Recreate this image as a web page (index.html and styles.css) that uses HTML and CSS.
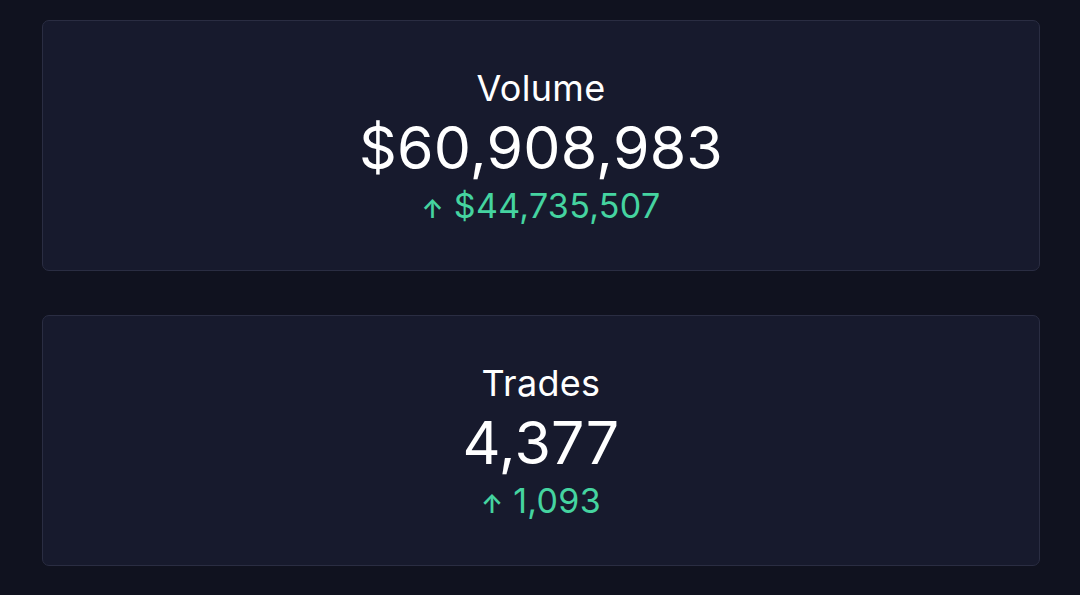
FILE: index.html
```html
<!DOCTYPE html>
<html lang="en">
<head>
    <meta charset="UTF-8">
    <meta name="viewport" content="width=device-width, initial-scale=1.0">
    <title>Stats</title>
    <link rel="stylesheet" href="styles.css">
</head>
<body>
    <div class="stats">
        <div class="card">
            <div class="label">Volume</div>
            <div class="value">$60,908,983</div>
            <div class="change"><span class="arrow">↑</span> $44,735,507</div>
        </div>
        <div class="card">
            <div class="label">Trades</div>
            <div class="value">4,377</div>
            <div class="change"><span class="arrow">↑</span> 1,093</div>
        </div>
    </div>
</body>
</html>
```

FILE: styles.css
```css
body {
    font-family: 'Inter', 'Noto Sans', sans-serif;
    background-color: #10121f;
    margin: 0;
    padding: 0;
    color: #fff;
}
.stats {
    display: flex;
    flex-direction: column;
    gap: 44px;
    padding: 20px 40px 0 42px;
}
.card {
    height: 251px;
    box-sizing: border-box;
    padding-top: 3px;
    background: #171a2d;
    border: 1.5px solid #2a2d42;
    border-radius: 7px;
    display: flex;
    flex-direction: column;
    align-items: center;
    justify-content: center;
}
.label {
    font-size: 36px;
    line-height: 52px;
    letter-spacing: 0.3px;
}
.value {
    font-size: 59px;
    line-height: 68px;
    letter-spacing: 0.2px;
}
.change {
    font-size: 34px;
    line-height: 48px;
    letter-spacing: 0.3px;
    color: #45d4a0;
}
.arrow {
    font-size: 25px;
    font-weight: 600;
}
```
